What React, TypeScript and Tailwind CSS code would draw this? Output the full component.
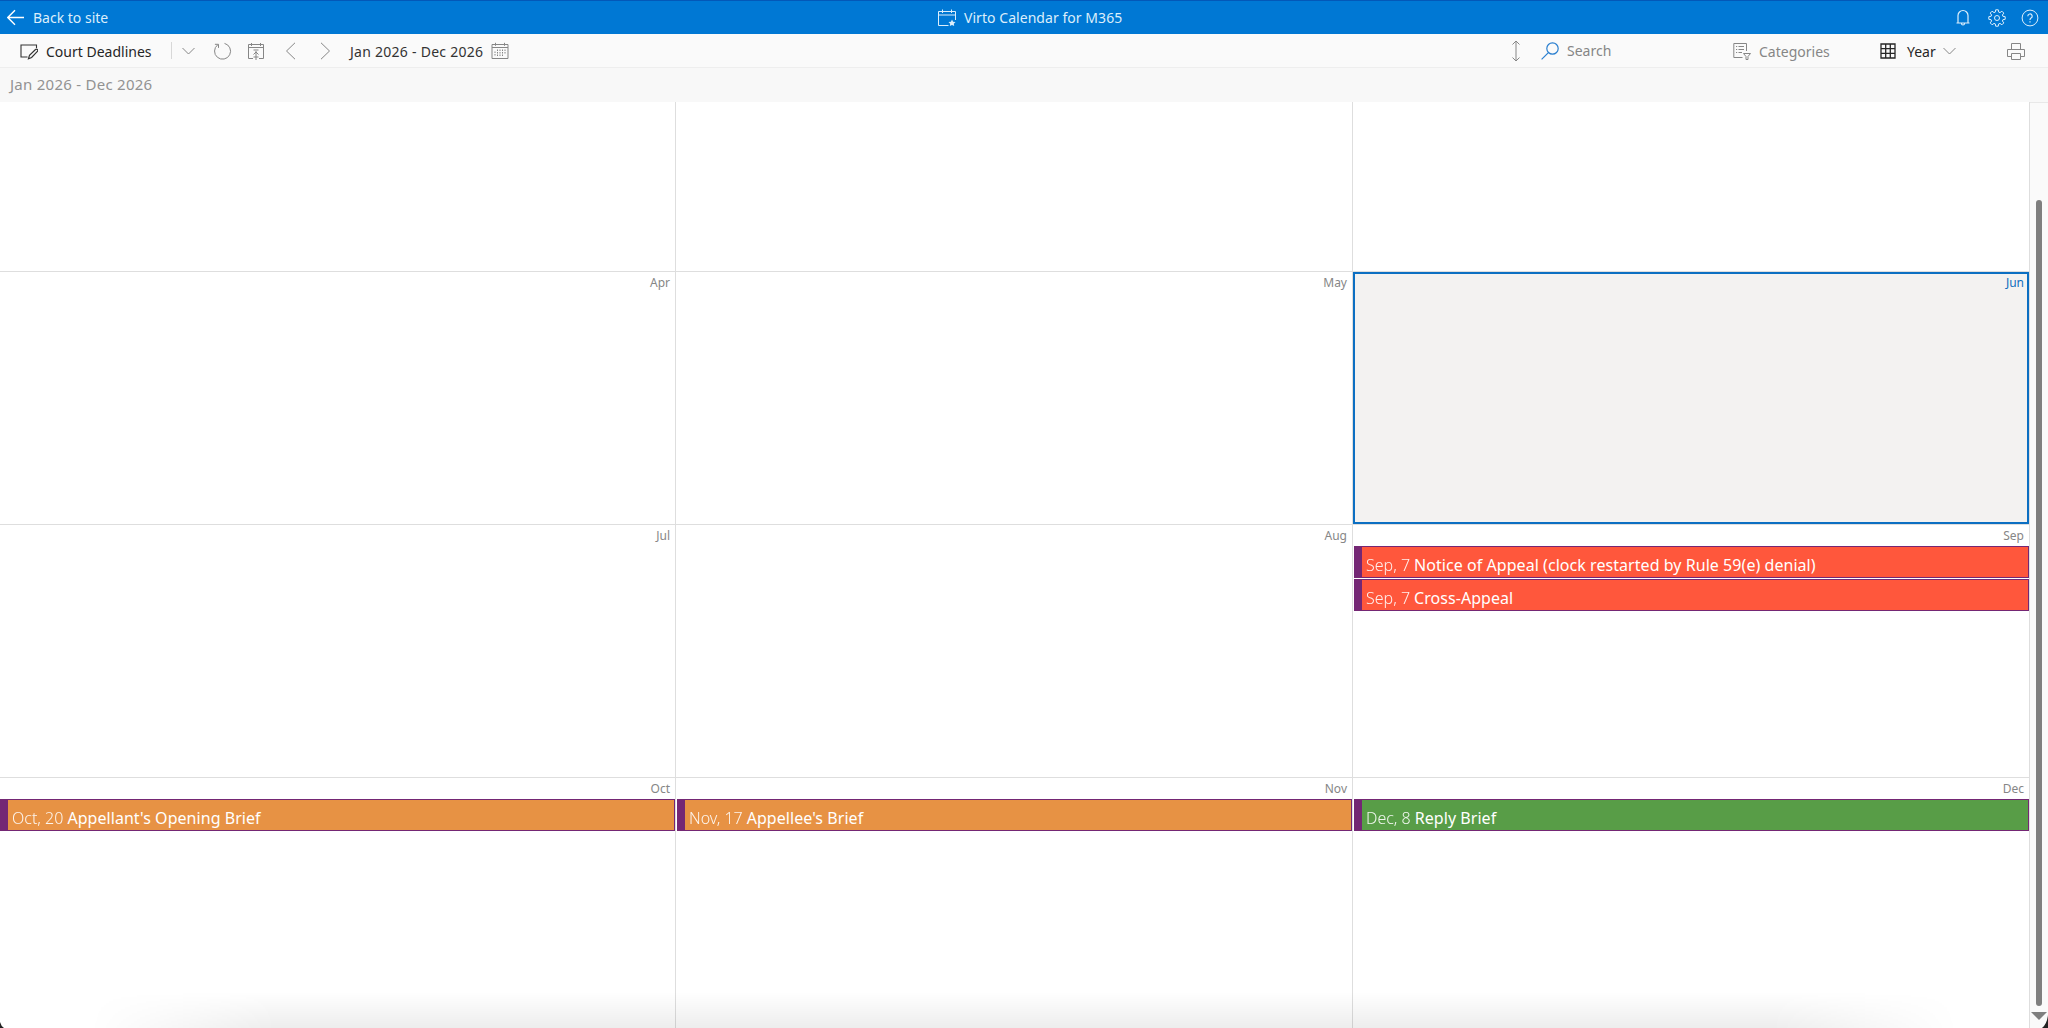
import type { ReactNode } from 'react';
import clsx from 'clsx';

type CalendarEvent = {
  date: string;
  title: string;
  color: 'red' | 'orange' | 'green';
};

type Month = {
  name: string;
  current?: boolean;
  events?: CalendarEvent[];
};

const months: Month[] = [
  { name: 'Apr' },
  { name: 'May' },
  { name: 'Jun', current: true },
  { name: 'Jul' },
  { name: 'Aug' },
  {
    name: 'Sep',
    events: [
      { date: 'Sep, 7', title: 'Notice of Appeal (clock restarted by Rule 59(e) denial)', color: 'red' },
      { date: 'Sep, 7', title: 'Cross-Appeal', color: 'red' },
    ],
  },
  { name: 'Oct', events: [{ date: 'Oct, 20', title: "Appellant's Opening Brief", color: 'orange' }] },
  { name: 'Nov', events: [{ date: 'Nov, 17', title: "Appellee's Brief", color: 'orange' }] },
  { name: 'Dec', events: [{ date: 'Dec, 8', title: 'Reply Brief', color: 'green' }] },
];

const eventColors = {
  red: 'bg-[#ff573c]',
  orange: 'bg-[#e79244]',
  green: 'bg-[#589d47]',
};

function Icon({ className, children }: { className?: string; children: ReactNode }) {
  return (
    <svg
      viewBox="0 0 18 18"
      fill="none"
      stroke="currentColor"
      strokeWidth={1}
      className={clsx('h-[18px] w-[18px] shrink-0', className)}
    >
      {children}
    </svg>
  );
}

function ChevronDown({ className }: { className?: string }) {
  return (
    <svg viewBox="0 0 13 8" fill="none" stroke="currentColor" className={clsx('h-2 w-[13px] shrink-0', className)}>
      <path d="M.5 1 6.5 7l6-6" />
    </svg>
  );
}

function TopBar() {
  return (
    <header className="flex h-[34px] items-center border-t border-[#0358b8] bg-[#0078d4] text-[14px] text-[#dceefb]">
      <div className="flex w-[938px] items-center">
        <Icon className="ml-[7px] text-white">
          <path d="M17 8.500H1M8 1.300.800 8.500 8 15.700" strokeWidth={1.400} />
        </Icon>
        <span className="ml-2">Back to site</span>
      </div>
      <div className="flex items-center">
        <Icon>
          <path d="M10.500 16.500H.500v-14h17V11M.500 6h17M4.500.500V4M13.500.500V4" />
          <path
            d="m14 10.500 1.100 2.200 2.400.3-1.700 1.700.4 2.400-2.200-1.100-2.200 1.100.4-2.400-1.700-1.700 2.400-.3z"
            fill="currentColor"
            stroke="none"
          />
        </Icon>
        <span className="ml-2 whitespace-nowrap tracking-[0.05px]">Virto Calendar for M365</span>
      </div>
      <div className="flex flex-1 items-center justify-end gap-[15.500px] pr-[9px]">
        <Icon>
          <path d="M4 14V6.500a5 5 0 0 1 10 0V14M2.500 14h13M7.500 14.500a1.500 1.500 0 0 0 3 0" strokeWidth={1.200} />
        </Icon>
        <Icon>
          <path
            d="m7.700.800h2.600l.4 2.300 1.300.5 1.900-1.400 1.900 1.900-1.400 1.900.5 1.300 2.300.4v2.600l-2.300.4-.5 1.300 1.400 1.900-1.900 1.900-1.900-1.400-1.300.5-.4 2.300H7.700l-.4-2.300-1.300-.5-1.900 1.400-1.900-1.900L3.600 12l-.5-1.300-2.300-.4V7.700l2.300-.4L3.600 6 2.200 4.100l1.900-1.900L6 3.600l1.300-.5z"
            strokeLinejoin="round"
          />
          <circle cx="9" cy="9" r="2.500" />
        </Icon>
        <Icon>
          <circle cx="9" cy="9" r="7.900" />
          <path d="M6.800 7.200a2.200 2.200 0 1 1 3.300 1.900C9.300 9.600 9 10 9 11M9 12.300v1.200" strokeWidth={1.200} />
        </Icon>
      </div>
    </header>
  );
}

function Toolbar() {
  return (
    <div className="flex h-[34px] items-center border-b border-[#eeeeee] bg-[#fafafa] text-[14px] text-[#868686]">
      <Icon className="ml-5 text-[#333333]">
        <path d="M7.500 15H1V3h15.500v3" strokeWidth={1.100} />
        <path d="m8.500 16.700 1-3.500 6-5.700a1.300 1.300 0 0 1 1.900 1.900l-5.800 6.100z" strokeWidth={1.200} />
      </Icon>
      <span className="ml-2 w-[125px] pt-px text-[#262626]">Court Deadlines</span>
      <div className="h-[17px] w-px bg-[#d8d8d8]" />
      <ChevronDown className="ml-[10px]" />
      <Icon className="ml-[19px]">
        <path d="M3.700 2.800A8 8 0 1 0 10.500 1.400M.900 2.300H4.500V5.900" />
      </Icon>
      <Icon className="ml-[15px]">
        <path d="M6 16.500H1.500v-14h15v14H12M1.500 5.500h15M4.500 1v3M13.500 1v3M6.500 8h5M9 9v9M6.500 12.500 9 10l2.500 2.500M6.500 15h5" />
      </Icon>
      <Icon className="ml-[17px]">
        <path d="M13 .800 4.500 9l8.500 8.200" />
      </Icon>
      <Icon className="ml-4">
        <path d="m5 .800 8.500 8.200L5 17.200" />
      </Icon>
      <span className="ml-[16px] w-[134px] whitespace-nowrap pt-px tracking-[0.26px] text-[#333333]">
        Jan 2026 - Dec 2026
      </span>
      <Icon className="ml-[7px]">
        <path d="M1 2.500h16v14H1zM1 5.500h16M4.500.800v3M13.500.800v3" />
        <path d="M6.500 7.500v7M9 7.500v7M11.500 7.500v7M14 7.500v5M4 9.500v5" strokeDasharray="1.500 1" />
      </Icon>

      <div className="ml-auto flex items-center">
        <svg viewBox="0 0 10 22" fill="none" stroke="currentColor" className="h-[22px] w-[10px]">
          <path d="M5 1.500v19M1.500 4.500 5 1l3.500 3.500M1.500 17.500 5 21l3.500-3.500" />
        </svg>
        <Icon className="ml-5 text-[#2a7fcf]">
          <circle cx="11.500" cy="6.500" r="5.700" strokeWidth={1.200} />
          <path d="M7.400 10.600.600 17.400" strokeWidth={1.200} />
        </Icon>
        <span className="ml-2 w-[166px]">Search</span>
        <Icon>
          <path d="M9.500 15.500H.800V1.500h12.700V9M3 4.500h1.200M5.500 4.500h5.500M3 7.500h1.200M5.500 7.500h5.500M3 10.500h1.200M5.500 10.500H9" />
          <path d="M10.500 11.500h7l-2.500 3v3h-2v-3z" />
        </Icon>
        <span className="ml-2 w-[121px] pt-px">Categories</span>
        <svg
          viewBox="0 0 16 16"
          fill="none"
          stroke="currentColor"
          strokeWidth={1.300}
          className="mr-px h-4 w-4 text-[#262626]"
        >
          <path d="M1 1h14v14H1zM5.700 1v14M10.300 1v14M1 5.700h14M1 10.300h14" />
        </svg>
        <span className="ml-[10px] w-[36px] pt-px text-[#262626]">Year</span>
        <ChevronDown />
        <Icon className="ml-[51px] mr-[23px]">
          <path d="M4.500 14.500h-4v-7h17v7h-4M4.500 7.500v-6h9v6M4.500 11.500h9v6h-9z" />
        </Icon>
      </div>
    </div>
  );
}

function EventBar({ event }: { event: CalendarEvent }) {
  return (
    <div
      className={clsx(
        'flex h-8 items-center overflow-hidden whitespace-nowrap border border-l-8 border-[#742774] pl-1 pt-[5px] text-[16px] leading-none text-white',
        eventColors[event.color]
      )}
    >
      <span className="font-light opacity-90">{event.date}</span>
      <span className="ml-1 tracking-[0.05px]">{event.title}</span>
    </div>
  );
}

function MonthCell({ month }: { month: Month }) {
  return (
    <div
      className={clsx(
        'group relative border-r border-t border-[#dedede]',
        month.current ? 'bg-[#f3f2f1]' : 'bg-white'
      )}
    >
      {month.current && <div className="absolute inset-0 border-2 border-[#0c6fc2]" />}
      <div
        className={clsx(
          'h-[21px] pr-[5px] pt-[2px] text-right text-[12px] leading-[17px]',
          month.current ? 'text-[#106ebe]' : 'text-[#868686]'
        )}
      >
        {month.name}
      </div>
      <div className="flex flex-col gap-px pl-px group-nth-[3n+1]:pl-0">
        {month.events?.map((event) => (
          <EventBar key={event.title} event={event} />
        ))}
      </div>
    </div>
  );
}

export default function App() {
  return (
    <div className="relative flex h-[1028px] w-[2048px] flex-col overflow-hidden bg-white font-['Noto_Sans','Open_Sans',sans-serif]">
      <TopBar />
      <Toolbar />
      <div className="flex h-[34px] shrink-0 items-center bg-[#f8f8f8] pb-[2px] pl-[10px] text-[15px] tracking-[0.26px] text-[#929292]">
        Jan 2026 - Dec 2026
      </div>
      <div className="flex min-h-0 flex-1">
        <div className="grid w-[2030px] shrink-0 grid-cols-[676px_677px_677px] grid-rows-[169px_253px_253px_253px]">
          {/* first quarter is scrolled under the toolbar */}
          <div className="border-r border-[#dedede]" />
          <div className="border-r border-[#dedede]" />
          <div className="border-r border-[#dedede]" />
          {months.map((month) => (
            <MonthCell key={month.name} month={month} />
          ))}
        </div>
        <div className="flex flex-1 flex-col items-center border-t border-[#e8e8e8] bg-[#fafafa] pt-[97px]">
          <div className="h-[806px] w-[6px] rounded-full bg-[#7f7f7f]" />
          <svg viewBox="0 0 16 8" className="mt-[6px] h-2 w-4 fill-[#7f7f7f]">
            <path d="M0 0h16L8 8z" />
          </svg>
        </div>
      </div>

      {/* shadow and rounded corners along the window's bottom edge */}
      <div className="pointer-events-none absolute bottom-0 left-[90px] right-[90px] h-9 bg-linear-to-t from-black/7 to-transparent mask-x-from-90% mask-x-to-100%" />
      <svg viewBox="0 0 4 6" className="absolute bottom-0 left-0 h-[6px] w-1 fill-[#222222]">
        <path d="M0 0q1 4 4 6H0z" />
      </svg>
      <svg viewBox="0 0 6 13" className="absolute bottom-0 right-0 h-[13px] w-[6px] fill-[#222222]">
        <path d="M6 0q-1 9-6 13h6z" />
      </svg>
    </div>
  );
}
